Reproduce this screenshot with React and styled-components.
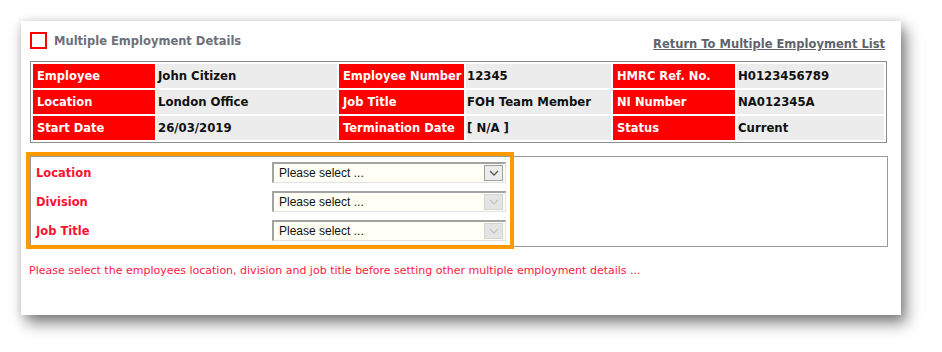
import styled, { createGlobalStyle } from 'styled-components';

const GlobalStyle = createGlobalStyle`
  html, body {
    margin: 0;
    padding: 0;
    background: #ffffff;
  }
  body {
    font-family: Tahoma, "DejaVu Sans", sans-serif;
  }
`;

const detailRows = [
  [
    { label: 'Employee', value: 'John Citizen' },
    { label: 'Employee Number', value: '12345' },
    { label: 'HMRC Ref. No.', value: 'H0123456789' },
  ],
  [
    { label: 'Location', value: 'London Office' },
    { label: 'Job Title', value: 'FOH Team Member' },
    { label: 'NI Number', value: 'NA012345A' },
  ],
  [
    { label: 'Start Date', value: '26/03/2019' },
    { label: 'Termination Date', value: '[ N/A ]' },
    { label: 'Status', value: 'Current' },
  ],
];

const formFields = [
  { label: 'Location', disabled: false },
  { label: 'Division', disabled: true },
  { label: 'Job Title', disabled: true },
];

function Chevron({ disabled }) {
  return (
    <svg width="10" height="6" viewBox="0 0 10 6">
      <path
        d="M1 1 L5 5 L9 1"
        fill="none"
        stroke={disabled ? '#c4c4c4' : '#5a5a5a'}
        strokeWidth="1.4"
      />
    </svg>
  );
}

function SelectBox({ disabled }) {
  return (
    <Select $disabled={disabled}>
      <SelectText>Please select ...</SelectText>
      <ArrowButton $disabled={disabled}>
        <Chevron disabled={disabled} />
      </ArrowButton>
    </Select>
  );
}

export default function App() {
  return (
    <>
      <GlobalStyle />
      <Page>
        <Card>
          <Header>
            <TitleGroup>
              <CheckBox />
              <Title>Multiple Employment Details</Title>
            </TitleGroup>
            <ReturnLink href="#">Return To Multiple Employment List</ReturnLink>
          </Header>

          <DetailsGrid>
            {detailRows.map((row) =>
              row.map((cell) => [
                <LabelCell key={cell.label + '-l'}>{cell.label}</LabelCell>,
                <ValueCell key={cell.label + '-v'}>{cell.value}</ValueCell>,
              ])
            )}
          </DetailsGrid>

          <FormBox>
            <Highlight>
              {formFields.map((field) => (
                <FormRow key={field.label}>
                  <FieldLabel>{field.label}</FieldLabel>
                  <SelectBox disabled={field.disabled} />
                </FormRow>
              ))}
            </Highlight>
          </FormBox>

          <Message>
            Please select the employees location, division and job title before
            setting other multiple employment details ...
          </Message>
        </Card>
      </Page>
    </>
  );
}

/* Styled Components */
const Page = styled.div`
  padding: 21px 41px 37px 21px;
`;

const Card = styled.div`
  width: 880px;
  height: 294px;
  box-sizing: border-box;
  padding: 11px 14px 0 9px;
  background: #ffffff;
  box-shadow: 0 0 8px rgba(0, 0, 0, 0.12), 5px 8px 14px rgba(0, 0, 0, 0.5);
`;

const Header = styled.div`
  display: flex;
  justify-content: space-between;
  align-items: flex-start;
  height: 29px;
`;

const TitleGroup = styled.div`
  display: flex;
  align-items: center;
  gap: 7px;
`;

const CheckBox = styled.div`
  width: 17px;
  height: 17px;
  box-sizing: border-box;
  border: 2px solid #ff0000;
`;

const Title = styled.span`
  font-family: "DejaVu Sans", sans-serif;
  font-size: 11.5px;
  font-weight: bold;
  color: #6b7079;
`;

const ReturnLink = styled.a`
  margin-top: 5px;
  margin-right: 2px;
  font-family: "DejaVu Sans", sans-serif;
  font-size: 11.5px;
  font-weight: bold;
  color: #5f636b;
  text-decoration: underline;
`;

const DetailsGrid = styled.div`
  display: grid;
  grid-template-columns: 122px 180px 125px 145px 122px 147px;
  grid-auto-rows: 24px;
  gap: 2px;
  padding: 2px;
  width: 857px;
  box-sizing: border-box;
  border: 1px solid #8c8c8c;
  background: #ffffff;
`;

const LabelCell = styled.div`
  display: flex;
  align-items: center;
  padding-left: 4px;
  background: #ff0000;
  color: #ffffff;
  font-family: "DejaVu Sans", sans-serif;
  font-size: 11.5px;
  font-weight: bold;
  white-space: nowrap;
`;

const ValueCell = styled.div`
  display: flex;
  align-items: center;
  padding-left: 1px;
  background: #ececec;
  color: #111111;
  font-family: "DejaVu Sans", sans-serif;
  font-size: 11.7px;
  font-weight: bold;
  white-space: nowrap;
`;

const FormBox = styled.div`
  margin-top: 13px;
  width: 858px;
  height: 91px;
  box-sizing: border-box;
  border: 1px solid #9a9a9a;
`;

const Highlight = styled.div`
  display: flex;
  flex-direction: column;
  gap: 8px;
  width: 478px;
  box-sizing: border-box;
  padding: 5px 3px 3px 5px;
  outline: 4px solid #ff9900;
  outline-offset: 1px;
`;

const FormRow = styled.div`
  display: grid;
  grid-template-columns: 236px 234px;
  align-items: center;
  height: 21px;
`;

const FieldLabel = styled.span`
  font-family: "DejaVu Sans", sans-serif;
  font-size: 11.5px;
  font-weight: bold;
  color: #ff1030;
`;

const Select = styled.div`
  display: flex;
  align-items: center;
  justify-content: space-between;
  height: 21px;
  box-sizing: border-box;
  padding: 0 2px 0 5px;
  background: #fffff6;
  border-top: 2px solid #a3a3a3;
  border-left: 2px solid #a3a3a3;
  border-right: 1px solid #e2e2e2;
  border-bottom: 1px solid #e2e2e2;
`;

const SelectText = styled.span`
  font-family: "Liberation Sans", Arial, sans-serif;
  font-size: 12px;
  color: #111111;
`;

const ArrowButton = styled.div`
  display: flex;
  align-items: center;
  justify-content: center;
  width: 19px;
  height: 16px;
  box-sizing: border-box;
  background: ${({ $disabled }) => ($disabled ? '#e4e4e4' : '#ececec')};
  border: 1px solid ${({ $disabled }) => ($disabled ? '#d4d4d4' : '#a0a0a0')};
`;

const Message = styled.p`
  margin: 17px 0 0 -1px;
  font-family: "DejaVu Sans", sans-serif;
  font-size: 11px;
  line-height: 14px;
  color: #ff1744;
`;
